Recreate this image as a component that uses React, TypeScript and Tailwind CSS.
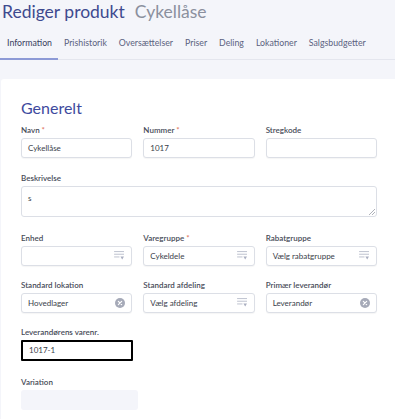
import React from 'react';

const FONT = { fontFamily: 'Lato, "Noto Sans", sans-serif' };

const tabs = ['Information', 'Prishistorik', 'Oversættelser', 'Priser', 'Deling', 'Lokationer', 'Salgsbudgetter'];

const ListIcon = () => (
  <svg width="11" height="9" viewBox="0 0 12 10" className="shrink-0">
    <rect x="0" y="0" width="11" height="1.2" fill="#c3c7d3" />
    <rect x="0" y="3" width="11" height="1.2" fill="#c3c7d3" />
    <rect x="0" y="6" width="6" height="1.2" fill="#c3c7d3" />
    <path d="M7 6 L11 6 L9 9.5 Z" fill="#a9aec0" />
  </svg>
);

const ClearIcon = () => (
  <svg width="10" height="10" viewBox="0 0 12 12" className="shrink-0">
    <circle cx="6" cy="6" r="6" fill="#a6aab8" />
    <path d="M4 4 L8 8 M8 4 L4 8" stroke="#fff" strokeWidth="1.4" strokeLinecap="round" />
  </svg>
);

const Label = ({ children, required }: { children: React.ReactNode; required?: boolean }) => (
  <div className="text-[8px] font-semibold text-[#474b58] leading-[8px] mb-[4px]">
    {children}
    {required && <span className="text-[#e0735a]"> *</span>}
  </div>
);

const Box = ({ children }: { children?: React.ReactNode }) => (
  <div className="h-[20px] flex items-center justify-between px-[6px] rounded-[3px] border border-[#dcdfe6] bg-white shadow-[0_1px_1px_rgba(0,0,0,0.04)] text-[8px] text-[#3a3e4a]">
    {children}
  </div>
);

const Field = ({
  label,
  required,
  value,
  icon,
}: {
  label: string;
  required?: boolean;
  value?: string;
  icon?: 'list' | 'clear';
}) => (
  <div>
    <Label required={required}>{label}</Label>
    <Box>
      <span>{value}</span>
      {icon === 'list' && <ListIcon />}
      {icon === 'clear' && <ClearIcon />}
    </Box>
  </div>
);

export default function App() {
  return (
    <div className="w-[395px] h-[419px] overflow-hidden bg-[#f4f5fa]" style={FONT}>
      {/* header */}
      <div className="flex items-baseline gap-[10px] pl-[2px] pt-[3px] h-[22px]">
        <span className="text-[17.5px] text-[#3e4a8f] leading-none">Rediger produkt</span>
        <span className="text-[17.5px] text-[#8b909e] leading-none">Cykellåse</span>
      </div>

      {/* tabs */}
      <div className="flex border-b border-[#e4e6ee] mt-[13px]">
        {tabs.map((t, i) => (
          <div
            key={t}
            className={`text-[8.75px] leading-none pt-[4px] pb-[10px] ${i === 0 ? 'pl-[7px] pr-[6px] text-[#3a4060] border-b-2 border-[#8d9ad6] -mb-px' : 'px-[6px] text-[#5b6280]'}`}
          >
            {t}
          </div>
        ))}
      </div>

      {/* card */}
      <div className="mt-[19px] ml-[1px] bg-white rounded-tl-[3px] h-[400px] pl-[20px] pr-[18px] pt-[21px]">
        <div className="text-[16px] text-[#3e4a9e] leading-none mb-[10px]">Generelt</div>

        <div className="grid grid-cols-3 gap-x-[11px] w-[356px]">
          <Field label="Navn" required value="Cykellåse" />
          <Field label="Nummer" required value="1017" />
          <Field label="Stregkode" />
        </div>

        <div className="mt-[16px] w-[356px]">
          <Label>Beskrivelse</Label>
          <div className="relative h-[31px] rounded-[3px] border border-[#dcdfe6] px-[6px] pt-[5px] text-[8px] text-[#3a3e4a]">
            s
            <svg width="6" height="6" viewBox="0 0 6 6" className="absolute right-[1px] bottom-[1px]">
              <path d="M6 0 L0 6 M6 3 L3 6" stroke="#9a9ea8" strokeWidth="0.8" />
            </svg>
          </div>
        </div>

        <div className="grid grid-cols-3 gap-x-[11px] gap-y-[15px] w-[356px] mt-[17px]">
          <Field label="Enhed" icon="list" />
          <Field label="Varegruppe" required value="Cykeldele" icon="list" />
          <Field label="Rabatgruppe" value="Vælg rabatgruppe" icon="list" />
          <Field label="Standard lokation" value="Hovedlager" icon="clear" />
          <Field label="Standard afdeling" value="Vælg afdeling" icon="list" />
          <Field label="Primær leverandør" value="Leverandør" icon="clear" />
          <div>
            <Label>Leverandørens varenr.</Label>
            <div className="h-[21px] w-[112px] flex items-center px-[6px] border-2 border-black rounded-[1px] text-[8px] text-[#3a3e4a]">
              1017-1
            </div>
          </div>
        </div>

        <div className="mt-[17px]">
          <Label>Variation</Label>
          <div className="h-[20px] w-[117px] rounded-[3px] bg-[#f4f5fa]" />
        </div>
      </div>
    </div>
  );
}
